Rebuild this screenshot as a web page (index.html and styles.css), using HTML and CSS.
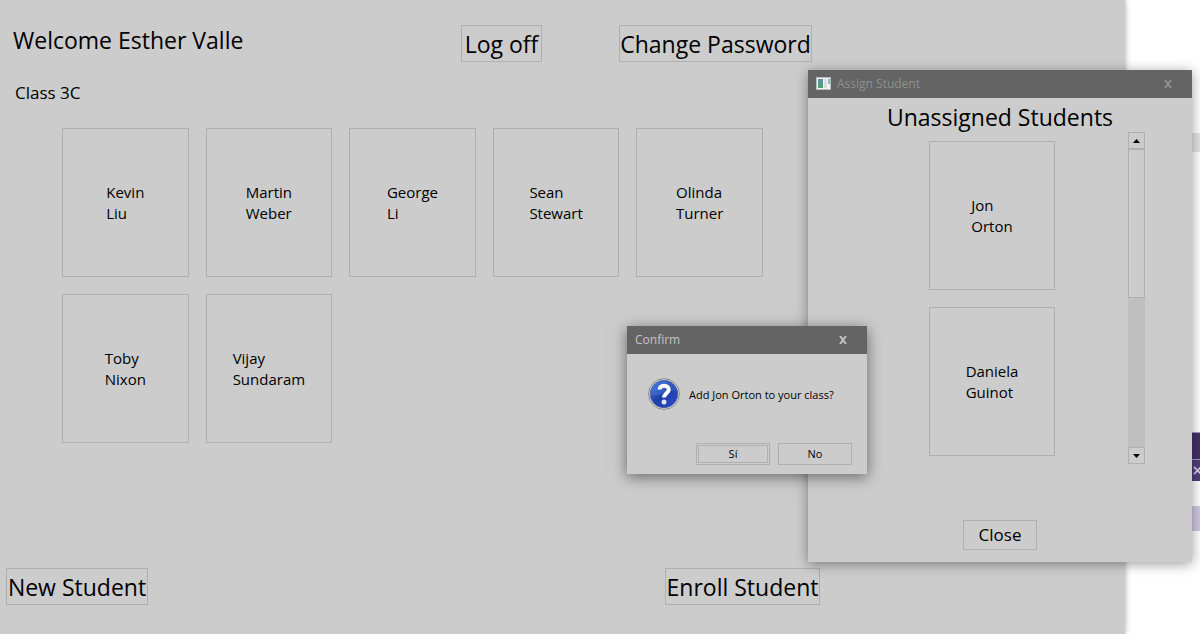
FILE: index.html
```html
<!DOCTYPE html>
<html lang="en">
<head>
<meta charset="utf-8">
<title>Class 3C</title>
<link rel="stylesheet" href="styles.css">
</head>
<body>
<div class="desktop">
  <div class="backdrop">
    <div class="strip strip-gray"></div>
    <div class="strip strip-title"></div>
    <div class="strip strip-tab">
      <svg class="tab-x" viewBox="0 0 10 10"><path d="M1 1 L9 9 M9 1 L1 9"/></svg>
    </div>
    <div class="strip strip-lilac"></div>
  </div>

  <main class="app">
    <header class="top">
      <h1 class="welcome">Welcome Esther Valle</h1>
      <button class="btn btn-large log-off" type="button">Log off</button>
      <button class="btn btn-large password" type="button">Change Password</button>
    </header>
    <h2 class="class-name">Class 3C</h2>
    <div class="cards">
      <button class="card" type="button"><span>Kevin<br>Liu</span></button>
      <button class="card" type="button"><span>Martin<br>Weber</span></button>
      <button class="card" type="button"><span>George<br>Li</span></button>
      <button class="card" type="button"><span>Sean<br>Stewart</span></button>
      <button class="card" type="button"><span>Olinda<br>Turner</span></button>
      <button class="card" type="button"><span>Toby<br>Nixon</span></button>
      <button class="card" type="button"><span>Vijay<br>Sundaram</span></button>
    </div>
    <footer class="bottom">
      <button class="btn btn-large new-student" type="button">New Student</button>
      <button class="btn btn-large enroll" type="button">Enroll Student</button>
    </footer>
  </main>

  <section class="window assign" role="dialog" aria-labelledby="assign-title">
    <header class="titlebar titlebar-idle">
      <svg class="app-icon" viewBox="0 0 15 13">
        <defs><linearGradient id="pane" x1="0" y1="0" x2="0" y2="1"><stop offset="0" stop-color="#6488b0"/><stop offset="1" stop-color="#4fa568"/></linearGradient></defs>
        <rect width="15" height="13" fill="#b4babd"/>
        <rect x="1" y="1" width="13" height="11" fill="#f1f3f4"/>
        <rect x="2" y="2" width="5" height="9" fill="url(#pane)"/>
        <rect x="8" y="2" width="3" height="9" fill="#dcdcdc"/>
        <rect x="12" y="2" width="2" height="5" fill="#8fb9b4"/>
      </svg>
      <span class="title" id="assign-title">Assign Student</span>
      <button class="close-x" type="button" aria-label="Close window"><svg viewBox="0 0 8 8"><path d="M1 0 L7 8 M7 0 L1 8"/></svg></button>
    </header>
    <div class="assign-body">
      <h2 class="heading">Unassigned Students</h2>
      <div class="picker">
        <div class="list">
          <button class="card" type="button"><span>Jon<br>Orton</span></button>
          <button class="card" type="button"><span>Daniela<br>Guinot</span></button>
        </div>
        <div class="scrollbar">
          <button class="arrow" type="button" aria-label="Scroll up"><svg viewBox="0 0 7 4"><path d="M0 4 L3.5 0 L7 4 Z"/></svg></button>
          <div class="track"><div class="thumb"></div></div>
          <button class="arrow" type="button" aria-label="Scroll down"><svg viewBox="0 0 7 4"><path d="M0 0 L3.5 4 L7 0 Z"/></svg></button>
        </div>
      </div>
      <button class="btn btn-close" type="button">Close</button>
    </div>
  </section>

  <section class="window confirm" role="dialog" aria-labelledby="confirm-title">
    <header class="titlebar">
      <span class="title" id="confirm-title">Confirm</span>
      <button class="close-x" type="button" aria-label="Close window"><svg viewBox="0 0 8 8"><path d="M1 0 L7 8 M7 0 L1 8"/></svg></button>
    </header>
    <div class="message">
      <svg class="question" viewBox="0 0 32 32">
        <defs><linearGradient id="ball" x1="0" y1="0" x2="1" y2="1"><stop offset="0" stop-color="#4d7ae0"/><stop offset=".5" stop-color="#1c3fa5"/><stop offset="1" stop-color="#3049d6"/></linearGradient></defs>
        <circle cx="16" cy="16" r="15.4" fill="#e6e8e8" stroke="#858585"/>
        <circle cx="16" cy="16" r="13.8" fill="url(#ball)" stroke="#43528a" stroke-width=".7"/>
        <path d="M3 17 C10 20 19 11 29 13 A13.4 13.4 0 0 0 5 8 A14 14 0 0 0 3 17 Z" fill="#5b8cf0" opacity=".3"/>
        <path d="M11.6 11.6 C11.6 6.4 21 6.4 20.8 11.8 C20.6 15.2 16 15.4 16 19.6" fill="none" stroke="#fff" stroke-width="4"/>
        <circle cx="16" cy="24" r="2.5" fill="#dfe3ee"/>
      </svg>
      <p>Add Jon Orton to your class?</p>
    </div>
    <div class="actions">
      <button class="btn btn-small btn-default" type="button">Sí</button>
      <button class="btn btn-small" type="button">No</button>
    </div>
  </section>
</div>
</body>
</html>
```
FILE: styles.css
```css
* { box-sizing: border-box; }

body {
  margin: 0;
  background: #fff;
  color: #000;
  font-family: "Open Sans", "Noto Sans", sans-serif;
}

h1, h2, p { margin: 0; font-weight: 400; }

button {
  margin: 0;
  padding: 0;
  border: 0;
  background: none;
  color: inherit;
  font-family: inherit;
}

svg { display: block; }

.desktop {
  position: relative;
  display: flex;
  min-height: 100vh;
  overflow: hidden;
}

/* Slivers of the windows behind, along the right edge */
.backdrop { position: absolute; top: 0; right: 0; bottom: 0; width: 8px; }
.strip { position: absolute; left: 0; right: 0; }
.strip-gray { top: 133px; height: 19px; background: #e4e4e4; }
.strip-title { top: 432px; height: 27px; background: #453066; border-top: 1px solid #a79bbd; }
.strip-tab { top: 459px; height: 22px; background: #543d7c; border-top: 1px solid #a79bbd; overflow: hidden; }
.strip-lilac { top: 506px; height: 25px; background: #d0c8e2; }
.tab-x { width: 9px; height: 9px; margin: 6px 0 0 1px; fill: none; stroke: #d5cde2; stroke-width: 2; }

.app {
  display: flex;
  flex: 1;
  flex-direction: column;
  margin-right: 75px;
  background: #ccc;
  box-shadow: 0 0 6px rgba(0, 0, 0, .35);
}

.top { display: flex; align-items: flex-start; padding: 25px 0 0 13px; }
.welcome { width: 448px; font-size: 23px; line-height: 30px; }

.btn { border: 1px solid #b0b0b0; white-space: nowrap; }
.btn-large { height: 37px; font-size: 23px; line-height: 34px; }
.log-off { width: 81px; }
.password { width: 193px; margin-left: 77px; }

.class-name { padding: 19px 0 0 15px; font-size: 17px; line-height: 24px; }

.cards {
  display: grid;
  grid-template-columns: repeat(5, 1fr);
  gap: 17px;
  max-width: 763px;
  margin-top: 23px;
  padding-left: 62px;
}

.card {
  display: grid;
  place-items: center;
  height: 149px;
  border: 1px solid #b0b0b0;
  font-size: 15px;
  line-height: 21px;
  text-align: left;
}

.bottom {
  display: flex;
  margin-top: auto;
  padding: 0 0 29px 6px;
}
.new-student { width: 142px; }
.enroll { width: 155px; margin-left: 517px; }

.window {
  position: absolute;
  display: flex;
  flex-direction: column;
  background: #ccc;
}

.titlebar {
  display: flex;
  align-items: center;
  height: 28px;
  padding: 0 20px 1px 8px;
  background: #646464;
  color: #c4c4c4;
  font-size: 12px;
}
.titlebar-idle { color: #909090; }
.app-icon { width: 15px; height: 13px; margin-right: 6px; }
.title { flex: 1; }
.close-x svg { width: 8px; height: 8px; fill: none; stroke: currentColor; stroke-width: 2; }

.assign {
  top: 70px;
  right: 8px;
  width: 384px;
  height: 492px;
  box-shadow: 0 2px 12px rgba(0, 0, 0, .4);
}
.assign-body { display: flex; flex: 1; flex-direction: column; align-items: center; padding: 4px 0 12px; }
.heading { font-size: 23px; line-height: 30px; }
.picker { display: flex; align-self: flex-end; gap: 73px; margin-right: 47px; }
.list { display: grid; gap: 17px; width: 126px; padding-top: 9px; align-content: start; }
.scrollbar { display: flex; flex-direction: column; width: 17px; height: 332px; }
.arrow { display: grid; place-items: center; height: 17px; border: 1px solid #b0b0b0; }
.arrow svg { width: 7px; height: 4px; }
.track { flex: 1; background: #bfbfbf; }
.thumb { height: 149px; border: 1px solid #b0b0b0; background: #ccc; }
.btn-close { width: 74px; height: 30px; margin-top: auto; font-size: 17px; line-height: 28px; }

.confirm {
  top: 326px;
  left: 627px;
  width: 240px;
  height: 148px;
  box-shadow: 0 3px 14px rgba(0, 0, 0, .5);
}
.message { display: flex; align-items: center; gap: 9px; padding: 24px 21px 0; font-size: 11px; }
.question { width: 32px; height: 32px; }
.actions { display: flex; justify-content: flex-end; gap: 8px; margin-top: auto; padding: 0 15px 9px; }
.btn-small { width: 74px; height: 22px; font-size: 11px; line-height: 16px; }
.btn-default { border: 3px double #b0b0b0; }
```
